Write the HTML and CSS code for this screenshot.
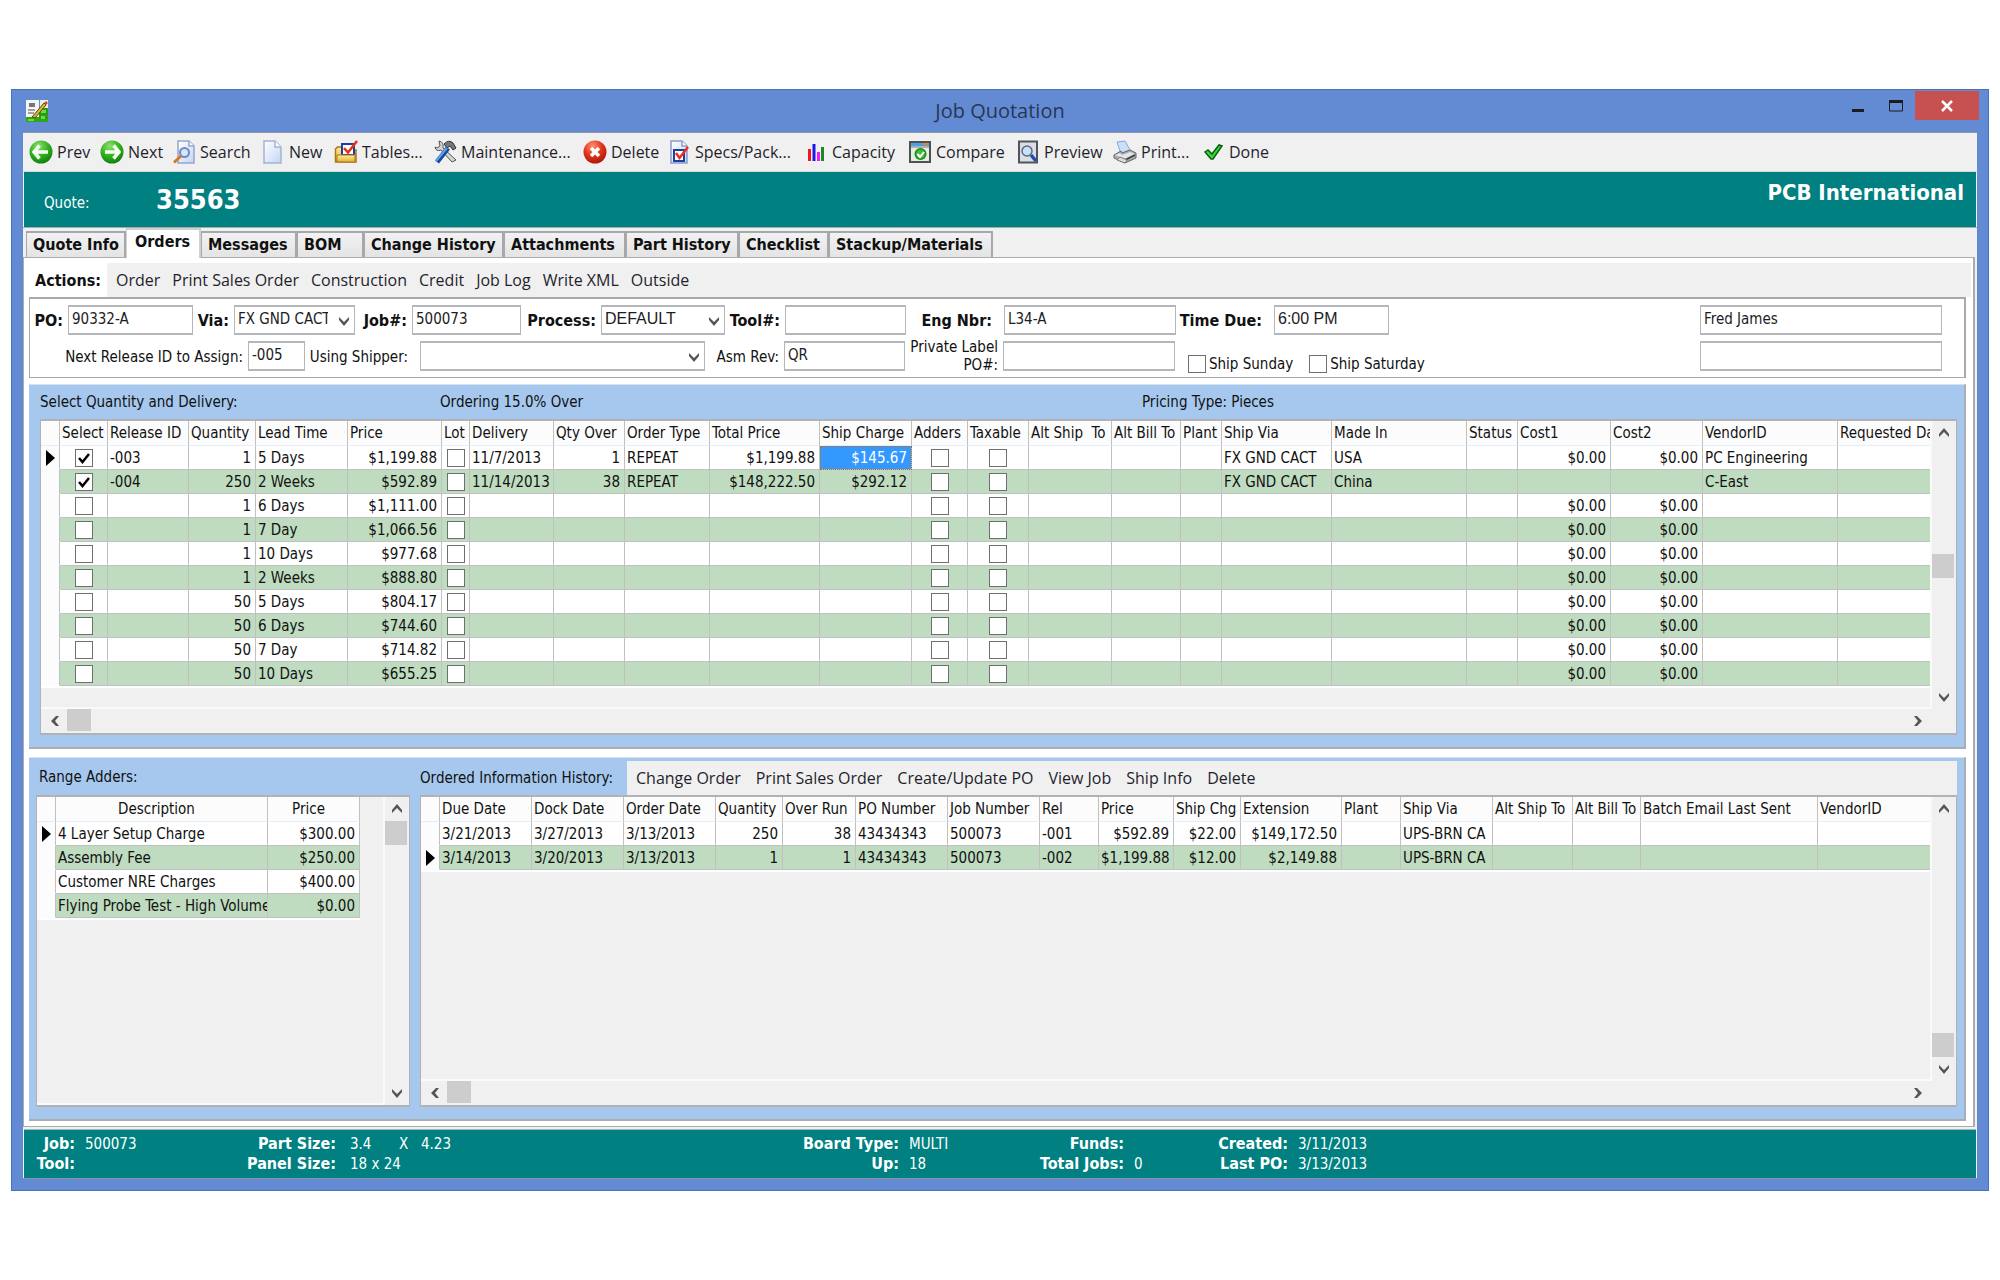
FILE: index.html
```html
<!DOCTYPE html>
<html lang="en">
<head>
<meta charset="utf-8">
<title>Job Quotation</title>
<link rel="stylesheet" href="styles.css">
</head>
<body>
<svg class="defs" aria-hidden="true">
  <defs>
    <radialGradient id="green" cx="40%" cy="25%" r="80%"><stop offset="0" stop-color="#8fe070"/><stop offset=".5" stop-color="#35b321"/><stop offset="1" stop-color="#0c7a0c"/></radialGradient>
    <radialGradient id="red" cx="40%" cy="25%" r="80%"><stop offset="0" stop-color="#ff9070"/><stop offset=".5" stop-color="#e2361c"/><stop offset="1" stop-color="#a81408"/></radialGradient>
    <linearGradient id="paper" x1="0" y1="0" x2="1" y2="1"><stop offset="0" stop-color="#ffffff"/><stop offset="1" stop-color="#c3d6f5"/></linearGradient>
    <linearGradient id="folder" x1="0" y1="0" x2="0" y2="1"><stop offset="0" stop-color="#ffeb9a"/><stop offset="1" stop-color="#e8ae2c"/></linearGradient>
    <symbol id="up" viewBox="0 0 12 12"><path d="M1 10V7l5-6 5 6v3L6 5z" fill="#555"/></symbol>
    <symbol id="down" viewBox="0 0 12 12"><path d="M1 2v3l5 6 5-6V2L6 7z" fill="#555"/></symbol>
    <symbol id="left" viewBox="0 0 12 12"><path d="M10 1H7L2 6l5 5h3L6 6z" fill="#555"/></symbol>
    <symbol id="right" viewBox="0 0 12 12"><path d="M2 1h3l5 5-5 5H2l4-5z" fill="#555"/></symbol>
    <symbol id="mark" viewBox="0 0 9 16"><path d="M0 0l9 8-9 8z" fill="#000"/></symbol>
  </defs>
</svg>

<div class="window">
  <header class="titlebar">
    <svg class="app-icon" viewBox="0 0 24 24" aria-hidden="true"><path d="M1 1h13v17H1z" fill="#f4f4f4"/><path d="M15 1h8v8h-8z" fill="#e8efe4"/><path d="M4 4h6v4H4z" fill="#777"/><path d="M3 11h7M3 14h6" stroke="#888" stroke-width="1.500"/><path d="M1 18h22v5H1z" fill="#2fa51c"/><path d="M14 9h9v11h-9z" fill="#2b9a1b"/><path d="M16 11h5v3h-5zM3 20h6v2H3zM16 17h4v3h-4z" fill="#73d83b"/><path d="M7 18L19 4l2 2L10 19z" fill="#d8b62d" stroke="#554a12"/><path d="M19 4l2-2 2 2-2 2z" fill="#d9432f"/></svg>
    <h1>Job Quotation</h1>
    <div class="window-buttons">
      <button type="button" aria-label="Minimize"><svg viewBox="0 0 16 16"><path d="M2 11h12v3H2z" fill="#1c1c1c"/></svg></button>
      <button type="button" aria-label="Maximize"><svg viewBox="0 0 16 16"><path d="M1 2h14v3H1z" fill="#1c1c1c"/><path d="M1.500 3v10h13V3" fill="none" stroke="#1c1c1c"/></svg></button>
      <button type="button" class="close" aria-label="Close"><svg viewBox="0 0 16 16"><path d="M3 3l10 10M13 3L3 13" stroke="#fff" stroke-width="2.500"/></svg></button>
    </div>
  </header>

  <div class="client">
    <nav class="toolbar" aria-label="Quote">
      <button type="button"><svg viewBox="0 0 24 24"><circle cx="12" cy="12" r="11.500" fill="url(#green)"/><path d="M10.500 5.500L5 12l5.500 6.500M5.500 12H19" fill="none" stroke="#f2fff0" stroke-width="3.500"/></svg>Prev</button>
      <button type="button"><svg viewBox="0 0 24 24"><circle cx="12" cy="12" r="11.500" fill="url(#green)"/><path d="M13.500 5.500L19 12l-5.500 6.500M18.500 12H5" fill="none" stroke="#f2fff0" stroke-width="3.500"/></svg>Next</button>
      <button type="button"><svg viewBox="0 0 24 24"><path d="M6 1h11l5 5v17H6z" fill="url(#paper)" stroke="#97a5cb" stroke-width="1.500"/><path d="M17 1v5h5" fill="#fff" stroke="#97a5cb" stroke-width="1.500"/><circle cx="12.500" cy="12.500" r="4.500" fill="#d3e6fb" stroke="#6f89c4" stroke-width="2"/><path d="M9 16l-7 6.500" stroke="#d9781f" stroke-width="3"/></svg>Search</button>
      <button type="button"><svg viewBox="0 0 24 24"><path d="M3 1h11l6 6v16H3z" fill="url(#paper)" stroke="#a6b2cf" stroke-width="1.500"/><path d="M14 1v6h6" fill="#fff" stroke="#a6b2cf" stroke-width="1.500"/></svg>New</button>
      <button type="button"><svg viewBox="0 0 24 24"><path d="M1.500 22V9l2-2H8v3h14v12z" fill="url(#folder)" stroke="#a9781c" stroke-width="1.500"/><path d="M8 4h12v11H8z" fill="#fff" stroke="#1b3fa5" stroke-width="2"/><path d="M10 8l4 4.500L23 1" fill="none" stroke="#ea2f1d" stroke-width="2.500"/><path d="M3 15h18v7H3z" fill="url(#folder)" stroke="#a9781c"/></svg>Tables...</button>
      <button type="button"><svg viewBox="0 0 24 24"><path d="M2 7q1 5 6 3l11 12 4-2L10 8q1-6-4-7l1 5-3 2z" fill="#d4d4d4" stroke="#555"/><path d="M11 4q5-5 9-1l3 5-3 2-3-4-3 2z" fill="#777" stroke="#333"/><path d="M15 8L4 22" stroke="#174a9e" stroke-width="5"/><path d="M14 8L3 21" stroke="#5fa0ee" stroke-width="2"/></svg>Maintenance...</button>
      <button type="button"><svg viewBox="0 0 24 24"><circle cx="12" cy="12" r="11.500" fill="url(#red)"/><path d="M8 8l8 8M16 8l-8 8" stroke="#fff" stroke-width="3.500"/></svg>Delete</button>
      <button type="button"><svg viewBox="0 0 24 24"><path d="M4 1h11l5 5v17H4z" fill="url(#paper)" stroke="#8b9cc6" stroke-width="1.500"/><path d="M15 1v5h5" fill="#fff" stroke="#8b9cc6" stroke-width="1.500"/><path d="M7 10h10v11H7z" fill="#fff" stroke="#1b3fa5" stroke-width="2"/><path d="M9 13l3.500 5L21 7" fill="none" stroke="#ea2f1d" stroke-width="2.500"/></svg>Specs/Pack...</button>
      <button type="button"><svg viewBox="0 0 24 24"><path d="M4 9h3v12H4z" fill="#f01818"/><path d="M8.500 4h3v17h-3z" fill="#1a1af0"/><path d="M13 12h3v9h-3z" fill="#f01cf0"/><path d="M17 7h3v14h-3z" fill="#168a2a"/></svg>Capacity</button>
      <button type="button"><svg viewBox="0 0 24 24"><path d="M2 2h20v20H2z" fill="#e9ece6" stroke="#4c5250" stroke-width="2"/><path d="M3 3h18v3H3z" fill="#4aa0e2"/><path d="M15 3h5v2h-5z" fill="#f08030"/><path d="M3 7h18" stroke="#777"/><circle cx="12.500" cy="14" r="6" fill="#178a1b"/><circle cx="12.500" cy="14" r="4.500" fill="#43bb3c"/><path d="M9.500 14l2.500 3 4-5" fill="none" stroke="#fff" stroke-width="2"/></svg>Compare</button>
      <button type="button"><svg viewBox="0 0 24 24"><path d="M3 1.500h18v21H3z" fill="#dcdee2" stroke="#50545c" stroke-width="2"/><circle cx="11" cy="11" r="5" fill="#c5e2fa" stroke="#5a6a80" stroke-width="1.500"/><path d="M15 15l5 6" stroke="#1c4fae" stroke-width="3.500"/></svg>Preview</button>
      <button type="button"><svg viewBox="0 0 24 24"><path d="M4 2l8-1 5 9-9 4z" fill="#c9e0fb" stroke="#8aa7da"/><path d="M1 15l7-4 1 2 8-3 6 3v5l-11 5-11-5z" fill="#a9acb3" stroke="#666"/><path d="M2 15l10 4 10-5-5-2-8 3-2-2z" fill="#e3e4e8"/><path d="M12 19l10-5v2l-10 5z" fill="#444"/><path d="M7 17l7 3-2 3-8-3z" fill="#ddd" stroke="#777"/></svg>Print...</button>
      <button type="button"><svg viewBox="0 0 24 24"><path d="M4 12l3-2 4 4 7-9 3 1-9 13h-2z" fill="#3fd83a" stroke="#0a5c12" stroke-width="1.500"/></svg>Done</button>
    </nav>

    <section class="banner">
      <span class="banner-label">Quote:</span>
      <strong class="banner-number">35563</strong>
      <strong class="banner-company">PCB International</strong>
    </section>

    <nav class="tabs" aria-label="Sections">
      <button type="button">Quote Info</button>
      <button type="button" class="active">Orders</button>
      <button type="button">Messages</button>
      <button type="button">BOM</button>
      <button type="button">Change History</button>
      <button type="button">Attachments</button>
      <button type="button">Part History</button>
      <button type="button">Checklist</button>
      <button type="button">Stackup/Materials</button>
    </nav>

    <main class="page">
      <div class="actions">
        <strong>Actions:</strong>
        <div class="menu">
          <button type="button">Order</button>
          <button type="button">Print Sales Order</button>
          <button type="button">Construction</button>
          <button type="button">Credit</button>
          <button type="button">Job Log</button>
          <button type="button">Write XML</button>
          <button type="button">Outside</button>
        </div>
      </div>

      <form class="order-form">
        <div class="form-row first">
          <label for="po">PO:</label><input id="po" type="text" value="90332-A">
          <label for="via">Via:</label><span class="select"><select id="via" class="narrow"><option>FX GND CACT</option></select><svg><use href="#down"/></svg></span>
          <label for="job">Job#:</label><input id="job" type="text" value="500073">
          <label for="process">Process:</label><span class="select"><select id="process" class="plain"><option>DEFAULT</option></select><svg><use href="#down"/></svg></span>
          <label for="tool">Tool#:</label><input id="tool" type="text">
          <label for="eng" class="wide-gap">Eng Nbr:</label><input id="eng" type="text" value="L34-A">
          <label for="due" class="wide-gap">Time Due:</label><input id="due" class="plain" type="text" value="6:00 PM">
          <input class="last" type="text" aria-label="Contact" value="Fred James">
        </div>
        <div class="form-row second">
          <label for="next">Next Release ID to Assign:</label><input id="next" type="text" value="-005">
          <label for="shipper" class="wide-gap">Using Shipper:</label><span class="select"><select id="shipper"><option></option></select><svg><use href="#down"/></svg></span>
          <label for="rev">Asm Rev:</label><input id="rev" type="text" value="QR">
          <label for="private" class="stacked">Private Label<br>PO#:</label><input id="private" type="text">
          <div class="checks">
            <label><input type="checkbox">Ship Sunday</label>
            <label><input type="checkbox">Ship Saturday</label>
          </div>
          <input class="last" type="text" aria-label="Contact note">
        </div>
      </form>

      <section class="panel">
        <div class="panel-head quantity-head">
          <h2>Select Quantity and Delivery:</h2><span>Ordering 15.0% Over</span><span>Pricing Type: Pieces</span>
        </div>
        <div class="grid quantity-grid">
          <div class="viewport">
            <table>
              <colgroup><col class="w19"><col class="w48"><col class="w81"><col class="w67"><col class="w92"><col class="w94"><col class="w28"><col class="w84"><col class="w71"><col class="w85"><col class="w110"><col class="w92"><col class="w56"><col class="w61"><col class="w83"><col class="w69"><col class="w41"><col class="w110"><col class="w135"><col class="w51"><col class="w93"><col class="w92"><col class="w135"><col></colgroup>
              <thead><tr><th></th><th>Select</th><th>Release ID</th><th>Quantity</th><th>Lead Time</th><th>Price</th><th>Lot</th><th>Delivery</th><th>Qty Over</th><th>Order Type</th><th>Total Price</th><th>Ship Charge</th><th>Adders</th><th>Taxable</th><th>Alt Ship&nbsp; To</th><th>Alt Bill To</th><th>Plant</th><th>Ship Via</th><th>Made In</th><th>Status</th><th>Cost1</th><th>Cost2</th><th>VendorID</th><th>Requested Date</th></tr></thead>
              <tbody>
                <tr><td><svg class="mark"><use href="#mark"/></svg></td><td><input type="checkbox" aria-label="Select" checked></td><td>-003</td><td>1</td><td>5 Days</td><td>$1,199.88</td><td><input type="checkbox" aria-label="Lot"></td><td>11/7/2013</td><td>1</td><td>REPEAT</td><td>$1,199.88</td><td class="selected">$145.67</td><td><input type="checkbox" aria-label="Adders"></td><td><input type="checkbox" aria-label="Taxable"></td><td></td><td></td><td></td><td>FX GND CACT</td><td>USA</td><td></td><td>$0.00</td><td>$0.00</td><td>PC Engineering</td><td></td></tr>
                <tr><td></td><td><input type="checkbox" aria-label="Select" checked></td><td>-004</td><td>250</td><td>2 Weeks</td><td>$592.89</td><td><input type="checkbox" aria-label="Lot"></td><td>11/14/2013</td><td>38</td><td>REPEAT</td><td>$148,222.50</td><td>$292.12</td><td><input type="checkbox" aria-label="Adders"></td><td><input type="checkbox" aria-label="Taxable"></td><td></td><td></td><td></td><td>FX GND CACT</td><td>China</td><td></td><td></td><td></td><td>C-East</td><td></td></tr>
                <tr><td></td><td><input type="checkbox" aria-label="Select"></td><td></td><td>1</td><td>6 Days</td><td>$1,111.00</td><td><input type="checkbox" aria-label="Lot"></td><td></td><td></td><td></td><td></td><td></td><td><input type="checkbox" aria-label="Adders"></td><td><input type="checkbox" aria-label="Taxable"></td><td></td><td></td><td></td><td></td><td></td><td></td><td>$0.00</td><td>$0.00</td><td></td><td></td></tr>
                <tr><td></td><td><input type="checkbox" aria-label="Select"></td><td></td><td>1</td><td>7 Day</td><td>$1,066.56</td><td><input type="checkbox" aria-label="Lot"></td><td></td><td></td><td></td><td></td><td></td><td><input type="checkbox" aria-label="Adders"></td><td><input type="checkbox" aria-label="Taxable"></td><td></td><td></td><td></td><td></td><td></td><td></td><td>$0.00</td><td>$0.00</td><td></td><td></td></tr>
                <tr><td></td><td><input type="checkbox" aria-label="Select"></td><td></td><td>1</td><td>10 Days</td><td>$977.68</td><td><input type="checkbox" aria-label="Lot"></td><td></td><td></td><td></td><td></td><td></td><td><input type="checkbox" aria-label="Adders"></td><td><input type="checkbox" aria-label="Taxable"></td><td></td><td></td><td></td><td></td><td></td><td></td><td>$0.00</td><td>$0.00</td><td></td><td></td></tr>
                <tr><td></td><td><input type="checkbox" aria-label="Select"></td><td></td><td>1</td><td>2 Weeks</td><td>$888.80</td><td><input type="checkbox" aria-label="Lot"></td><td></td><td></td><td></td><td></td><td></td><td><input type="checkbox" aria-label="Adders"></td><td><input type="checkbox" aria-label="Taxable"></td><td></td><td></td><td></td><td></td><td></td><td></td><td>$0.00</td><td>$0.00</td><td></td><td></td></tr>
                <tr><td></td><td><input type="checkbox" aria-label="Select"></td><td></td><td>50</td><td>5 Days</td><td>$804.17</td><td><input type="checkbox" aria-label="Lot"></td><td></td><td></td><td></td><td></td><td></td><td><input type="checkbox" aria-label="Adders"></td><td><input type="checkbox" aria-label="Taxable"></td><td></td><td></td><td></td><td></td><td></td><td></td><td>$0.00</td><td>$0.00</td><td></td><td></td></tr>
                <tr><td></td><td><input type="checkbox" aria-label="Select"></td><td></td><td>50</td><td>6 Days</td><td>$744.60</td><td><input type="checkbox" aria-label="Lot"></td><td></td><td></td><td></td><td></td><td></td><td><input type="checkbox" aria-label="Adders"></td><td><input type="checkbox" aria-label="Taxable"></td><td></td><td></td><td></td><td></td><td></td><td></td><td>$0.00</td><td>$0.00</td><td></td><td></td></tr>
                <tr><td></td><td><input type="checkbox" aria-label="Select"></td><td></td><td>50</td><td>7 Day</td><td>$714.82</td><td><input type="checkbox" aria-label="Lot"></td><td></td><td></td><td></td><td></td><td></td><td><input type="checkbox" aria-label="Adders"></td><td><input type="checkbox" aria-label="Taxable"></td><td></td><td></td><td></td><td></td><td></td><td></td><td>$0.00</td><td>$0.00</td><td></td><td></td></tr>
                <tr><td></td><td><input type="checkbox" aria-label="Select"></td><td></td><td>50</td><td>10 Days</td><td>$655.25</td><td><input type="checkbox" aria-label="Lot"></td><td></td><td></td><td></td><td></td><td></td><td><input type="checkbox" aria-label="Adders"></td><td><input type="checkbox" aria-label="Taxable"></td><td></td><td></td><td></td><td></td><td></td><td></td><td>$0.00</td><td>$0.00</td><td></td><td></td></tr>
              </tbody>
            </table>
          </div>
          <div class="vscroll">
            <button type="button" aria-label="Scroll up"><svg><use href="#up"/></svg></button>
            <span class="track before"></span><span class="thumb"></span><span class="track after"></span>
            <button type="button" aria-label="Scroll down"><svg><use href="#down"/></svg></button>
          </div>
          <div class="hscroll">
            <button type="button" aria-label="Scroll left"><svg><use href="#left"/></svg></button>
            <span class="thumb"></span><span class="track"></span>
            <button type="button" aria-label="Scroll right"><svg><use href="#right"/></svg></button>
          </div>
        </div>
      </section>

      <section class="panel lower">
        <div class="adders">
          <div class="panel-head"><h2>Range Adders:</h2></div>
          <div class="grid adders-grid">
            <div class="viewport">
              <table>
                <colgroup><col class="w19"><col class="w212"><col class="w92"></colgroup>
                <thead><tr><th></th><th>Description</th><th>Price</th></tr></thead>
                <tbody>
                  <tr><td><svg class="mark"><use href="#mark"/></svg></td><td>4 Layer Setup Charge</td><td>$300.00</td></tr>
                  <tr><td></td><td>Assembly Fee</td><td>$250.00</td></tr>
                  <tr><td></td><td>Customer NRE Charges</td><td>$400.00</td></tr>
                  <tr><td></td><td>Flying Probe Test - High Volume</td><td>$0.00</td></tr>
                </tbody>
              </table>
            </div>
            <div class="vscroll">
              <button type="button" aria-label="Scroll up"><svg><use href="#up"/></svg></button>
              <span class="thumb"></span><span class="track after"></span>
              <button type="button" aria-label="Scroll down"><svg><use href="#down"/></svg></button>
            </div>
          </div>
        </div>

        <div class="history">
          <div class="panel-head history-head">
            <h2>Ordered Information History:</h2>
            <div class="menu">
              <button type="button">Change Order</button>
              <button type="button">Print Sales Order</button>
              <button type="button">Create/Update PO</button>
              <button type="button">View Job</button>
              <button type="button">Ship Info</button>
              <button type="button">Delete</button>
            </div>
          </div>
          <div class="grid history-grid">
            <div class="viewport">
              <table>
                <colgroup><col class="w19"><col class="w92"><col class="w92"><col class="w92"><col class="w67"><col class="w73"><col class="w92"><col class="w92"><col class="w59"><col class="w75"><col class="w67"><col class="w101"><col class="w59"><col class="w92"><col class="w80"><col class="w68"><col class="w177"><col></colgroup>
                <thead><tr><th></th><th>Due Date</th><th>Dock Date</th><th>Order Date</th><th>Quantity</th><th>Over Run</th><th>PO Number</th><th>Job Number</th><th>Rel</th><th>Price</th><th>Ship Chg</th><th>Extension</th><th>Plant</th><th>Ship Via</th><th>Alt Ship To</th><th>Alt Bill To</th><th>Batch Email Last Sent</th><th>VendorID</th></tr></thead>
                <tbody>
                  <tr><td></td><td>3/21/2013</td><td>3/27/2013</td><td>3/13/2013</td><td>250</td><td>38</td><td>43434343</td><td>500073</td><td>-001</td><td>$592.89</td><td>$22.00</td><td>$149,172.50</td><td></td><td>UPS-BRN CA</td><td></td><td></td><td></td><td></td></tr>
                  <tr><td><svg class="mark"><use href="#mark"/></svg></td><td>3/14/2013</td><td>3/20/2013</td><td>3/13/2013</td><td>1</td><td>1</td><td>43434343</td><td>500073</td><td>-002</td><td>$1,199.88</td><td>$12.00</td><td>$2,149.88</td><td></td><td>UPS-BRN CA</td><td></td><td></td><td></td><td></td></tr>
                </tbody>
              </table>
            </div>
            <div class="vscroll">
              <button type="button" aria-label="Scroll up"><svg><use href="#up"/></svg></button>
              <span class="track before"></span><span class="thumb"></span>
              <button type="button" aria-label="Scroll down"><svg><use href="#down"/></svg></button>
            </div>
            <div class="hscroll">
              <button type="button" aria-label="Scroll left"><svg><use href="#left"/></svg></button>
              <span class="thumb"></span><span class="track"></span>
              <button type="button" aria-label="Scroll right"><svg><use href="#right"/></svg></button>
            </div>
          </div>
        </div>
      </section>
    </main>

    <footer class="status">
      <b>Job:</b><span>500073</span><b>Part Size:</b><span class="size"><span>3.4</span><span>X</span><span>4.23</span></span><b>Board Type:</b><span>MULTI</span><b>Funds:</b><span></span><b>Created:</b><span>3/11/2013</span>
      <b>Tool:</b><span></span><b>Panel Size:</b><span class="size">18 x 24</span><b>Up:</b><span>18</span><b>Total Jobs:</b><span>0</span><b>Last PO:</b><span>3/13/2013</span>
    </footer>
  </div>
</div>
</body>
</html>
```

FILE: styles.css
```css
:root {
  --ui: "DejaVu Sans Condensed", "DejaVu Sans", Tahoma, sans-serif;
  --shell: "Open Sans", "Noto Sans", "Segoe UI", sans-serif;
  --grid-line: #c0c0c0;
  --face: #f0f0f0;
  --teal: #008080;
  --panel: #a6c8ee;
}

* { box-sizing: border-box; }

body {
  margin: 0;
  padding: 89px 11px;
  background: #fff;
  color: #111;
  font: 15px/18px var(--ui);
}

button, input, select { margin: 0; font: inherit; color: inherit; }
button { padding: 0; border: 0; background: none; text-align: left; white-space: nowrap; }
h1, h2 { margin: 0; font-weight: normal; }
svg { display: block; flex: none; }
.defs { position: absolute; width: 0; height: 0; }

/* Window frame */
.window {
  padding: 0 11px 11px;
  border: 1px solid #4a72b8;
  background: #628bd3;
}

.titlebar {
  display: grid;
  grid-template-columns: 1fr auto 1fr;
  align-items: center;
  height: 42px;
}
.app-icon { width: 24px; height: 24px; margin-left: 2px; }
.titlebar h1 { color: #2a3654; font: 20px/28px var(--shell); }
.window-buttons { display: flex; align-self: start; justify-content: flex-end; margin: 1px -2px 0 0; }
.window-buttons button { display: grid; place-items: center; width: 38px; height: 29px; }
.window-buttons svg { width: 16px; height: 16px; }
.window-buttons .close { width: 64px; background: #c75050; }

.client { border: 1px solid #8a93a8; border-width: 1px 0; background: var(--face); }

/* Toolbar */
.toolbar {
  display: grid;
  grid-template-columns: 71px 72px 89px 73px 99px 150px 84px 137px 104px 108px 97px 88px auto;
  align-items: center;
  justify-content: start;
  height: 39px;
  padding-left: 6px;
  border-bottom: 1px solid #d8dadc;
  color: #1f1f2c;
  font: 16px/22px var(--shell);
}
.toolbar button { display: flex; align-items: center; gap: 4px; }
.toolbar svg { width: 24px; height: 24px; }

.banner {
  display: grid;
  grid-template-columns: 112px auto 1fr;
  align-items: center;
  height: 55px;
  margin: 0 1px;
  padding: 0 12px 0 20px;
  background: var(--teal);
  color: #fff;
}
.banner-label { padding-top: 6px; }
.banner-number { font-size: 27px; line-height: 32px; }
.banner-company { justify-self: end; padding-bottom: 14px; font-size: 22px; line-height: 24px; }

/* Tabs */
.tabs {
  display: grid;
  grid-template-columns: 100px 75px 96px 67px 140px 122px 113px 90px 164px;
  align-items: end;
  height: 30px;
  padding-left: 3px;
  border-top: 1px solid #a9a9a9;
}
.tabs button {
  height: 26px;
  padding-left: 6px;
  border: 1px solid #a6a8ab;
  border-width: 2px 2px 0 1px;
  background: linear-gradient(#f2f2f2, #e4e4e4);
  font-size: 16px;
  font-weight: bold;
}
.tabs .active {
  position: relative;
  height: 30px;
  margin-bottom: -1px;
  padding: 0 0 4px 8px;
  border-color: #d0d0d0;
  background: #fff;
}

.page {
  margin-right: 2px;
  padding: 5px 7px 5px 5px;
  border: 1px solid #a9abae;
  border-width: 1px 2px 1px 1px;
  background: #fff;
}

.actions { display: flex; align-items: stretch; height: 34px; margin-right: -5px; }
.actions strong { width: 78px; padding: 9px 0 0 6px; font-size: 16px; }
.menu { display: flex; flex: 1; align-items: center; gap: 12px; padding-left: 9px; background: var(--face); color: #1f1f2c; font: 16px/22px var(--shell); }

/* Order form */
.order-form { padding: 6px 22px 0 0; border: 1px solid #a6a8ab; border-width: 2px 2px 1px 1px; }
.form-row { display: grid; grid-template-rows: 30px; height: 36px; }
.form-row.first { grid-template-columns: 38px 125px 41px 121px 57px 109px 80px 124px 60px 121px 98px 172px 98px 115px 1fr; }
.form-row.second { grid-template-columns: 218px 57px 115px 285px 79px 121px 98px 172px 1fr 242px; }
.form-row.first .last { justify-self: end; width: 242px; }
.form-row label { align-self: end; padding: 0 5px 5px 0; text-align: right; white-space: nowrap; }
.form-row.first > label { font-size: 16px; font-weight: bold; }
.form-row label.wide-gap { padding-right: 12px; }
.form-row label.stacked { align-self: center; padding-bottom: 0; }
.form-row input[type="text"], .form-row select {
  min-width: 0;
  height: 30px;
  padding: 0 4px 3px 3px;
  border: 1px solid #b4b6ba;
  border-width: 2px 1px;
  border-radius: 0;
  background: #fff;
  color: #1c1c24;
}
.form-row input.plain, .form-row select.plain { font-family: "Liberation Sans", Arial, sans-serif; font-size: 16px; }
.select { position: relative; display: block; }
.select select { width: 100%; appearance: none; padding-right: 20px; }
.form-row select.narrow { padding-right: 26px; text-overflow: clip; }
.select svg { position: absolute; right: 5px; top: 10px; width: 12px; height: 12px; pointer-events: none; }
.checks { display: flex; gap: 16px; padding: 14px 0 0 13px; }
.form-row .checks label { display: flex; align-items: center; gap: 3px; align-self: start; padding: 0; }

input[type="checkbox"] {
  display: block;
  appearance: none;
  width: 18px;
  height: 18px;
  border: 1px solid #6f6f6f;
  background: #fff;
}
input[type="checkbox"]:checked {
  background: #fff url("data:image/svg+xml,%3Csvg xmlns='http://www.w3.org/2000/svg' viewBox='0 0 16 16'%3E%3Cpath d='M3 8l3.500 4L13 4' fill='none' stroke='%23000' stroke-width='2.500'/%3E%3C/svg%3E");
}

/* Panels */
.panel {
  margin-top: 6px;
  padding: 0 7px 12px 11px;
  border: 1px solid #a9aeb4;
  border-width: 1px 2px 2px 0;
  border-top-color: #d5e2f0;
  background: var(--panel);
}
.panel.lower { display: grid; grid-template-columns: 374px 1fr; gap: 10px; margin-top: 8px; padding-left: 7px; }
.panel-head { display: flex; align-items: center; height: 37px; }
.panel-head h2 { font-size: 15px; line-height: 18px; }
.quantity-head { display: grid; grid-template-columns: 400px 702px auto; justify-content: start; height: 34px; }
.adders .panel-head { padding-left: 3px; }
.history-head { align-items: stretch; padding-top: 3px; }
.history-head h2 { width: 207px; padding-top: 8px; white-space: nowrap; }
.history-head .menu { gap: 15px; }

/* Data grids */
.grid {
  display: grid;
  grid-template-columns: 1fr 24px;
  border: 1px solid #b0b2b5;
  border-width: 2px 1px;
  background: var(--face);
}
.viewport { min-width: 0; overflow: hidden; border-right: 2px solid #fafafa; border-bottom: 2px solid #fafafa; }
.quantity-grid .viewport { height: 288px; }
.adders-grid .viewport { height: 308px; }
.history-grid .viewport { height: 284px; }

table { width: 100%; table-layout: fixed; border-collapse: separate; border-spacing: 0; border-bottom: 2px solid #fff; }
.adders-grid table { width: 323px; }
.w19 { width: 19px; } .w28 { width: 28px; } .w41 { width: 41px; } .w48 { width: 48px; } .w51 { width: 51px; }
.w56 { width: 56px; } .w59 { width: 59px; } .w61 { width: 61px; } .w67 { width: 67px; } .w68 { width: 68px; }
.w69 { width: 69px; } .w71 { width: 71px; } .w73 { width: 73px; } .w75 { width: 75px; } .w80 { width: 80px; }
.w81 { width: 81px; } .w83 { width: 83px; } .w84 { width: 84px; } .w85 { width: 85px; } .w92 { width: 92px; }
.w93 { width: 93px; } .w94 { width: 94px; } .w101 { width: 101px; } .w110 { width: 110px; } .w135 { width: 135px; }
.w177 { width: 177px; } .w212 { width: 212px; }

th, td {
  height: 24px;
  padding: 0 4px 0 2px;
  border-right: 1px solid var(--grid-line);
  overflow: hidden;
  white-space: nowrap;
  text-align: left;
  font-weight: normal;
}
th { height: 25px; padding-right: 0; background: #fcfcfc; border-bottom: 1px solid #e4eefa; }
td { border-bottom: 1px solid var(--grid-line); background: #fff; }
tbody tr:nth-child(even) td { background: #bfdcc0; }
tbody tr td:first-child { padding: 0; border-bottom-color: #fcfcfc; background: #fcfcfc; }
th:last-child, td:last-child { border-right: 0; }
.adders-grid th:last-child, .adders-grid td:last-child { border-right: 1px solid var(--grid-line); }
.adders-grid th { padding-right: 12px; text-align: center; }
.mark { width: 9px; height: 16px; margin-left: 5px; }

.quantity-grid td:nth-child(4), .quantity-grid td:nth-child(6), .quantity-grid td:nth-child(9),
.quantity-grid td:nth-child(11), .quantity-grid td:nth-child(12), .quantity-grid td:nth-child(21),
.quantity-grid td:nth-child(22), .adders-grid td:nth-child(3), .history-grid td:nth-child(5),
.history-grid td:nth-child(6), .history-grid td:nth-child(10), .history-grid td:nth-child(11),
.history-grid td:nth-child(12) { text-align: right; }
td input[type="checkbox"] { margin: 0 auto; }
.quantity-grid td:has(input) { padding-right: 2px; }
.quantity-grid td.selected { background: #3399ff; color: #fff; outline: 1px dotted #c56a10; outline-offset: -1px; }

/* Scroll bars */
.vscroll { display: flex; flex-direction: column; }
.vscroll button, .hscroll button { display: grid; place-items: center; width: 24px; height: 24px; }
.vscroll svg, .hscroll svg { width: 12px; height: 12px; }
.vscroll .thumb { width: 22px; height: 24px; background: #cdcdcd; }
.vscroll .after { flex: 1; }
.quantity-grid .before { height: 109px; }
.history-grid .before { flex: 1; }
.hscroll { display: flex; grid-column: 1 / -1; height: 24px; padding: 0 26px 0 2px; }
.hscroll .thumb { width: 24px; height: 22px; background: #cdcdcd; }
.hscroll .track { flex: 1; }

/* Status bar */
.status {
  display: grid;
  grid-template-columns: 51px 151px 90px 444px 99px 116px 89px 71px 73px auto;
  column-gap: 10px;
  align-content: center;
  justify-content: start;
  height: 49px;
  margin: 2px 1px 0;
  border-top: 1px solid #9bb;
  background: var(--teal);
  color: #fff;
  line-height: 20px;
}
.status b { font-size: 16px; text-align: right; white-space: nowrap; }
.size { display: grid; grid-template-columns: 49px 22px auto; justify-content: start; padding-left: 4px; white-space: nowrap; }
```
